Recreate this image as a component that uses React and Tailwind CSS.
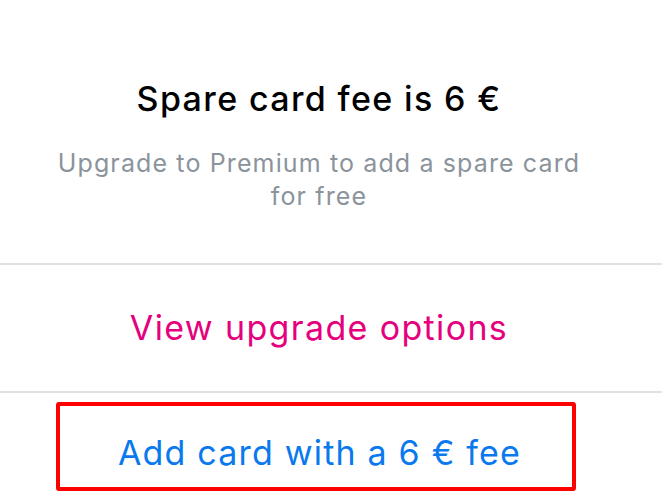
import React from 'react';

const SpareCardSheet = () => {
    return (
        <div className="w-[662px] h-[499px] overflow-hidden bg-white font-['Inter','Liberation_Sans',sans-serif]">
            {/* info block */}
            <div className="flex flex-col items-center pt-[79px] pb-[50px] pr-[24px]">
                <h3 className="text-[34px] leading-[40px] font-medium tracking-[0.04em] text-black">Spare card fee is 6 €</h3>
                <p className="mt-[28px] w-[545px] text-center text-[25px] leading-[33px] tracking-[0.045em] text-[#8b939b]">
                    Upgrade to Premium to add a spare card for free
                </p>
            </div>

            <div className="h-[2px] bg-[#e1e1e1]" />

            <button className="w-full h-[126px] flex items-center justify-center pr-[24px]">
                <span className="text-[34px] leading-[40px] tracking-[0.04em] text-[#e5007d]">View upgrade options</span>
            </button>

            <div className="h-[2px] bg-[#e1e1e1]" />

            <div className="pt-[9px] pl-[56px]">
                <button className="w-[520px] h-[89px] border-4 border-[#ff0000] rounded-[3px] flex items-center justify-center pt-[12px] pl-[7px]">
                    <span className="text-[34px] leading-[40px] tracking-[0.035em] text-[#0b79ee]">Add card with a 6 € fee</span>
                </button>
            </div>
        </div>
    );
};

export default function App() {
    return <SpareCardSheet />;
}
